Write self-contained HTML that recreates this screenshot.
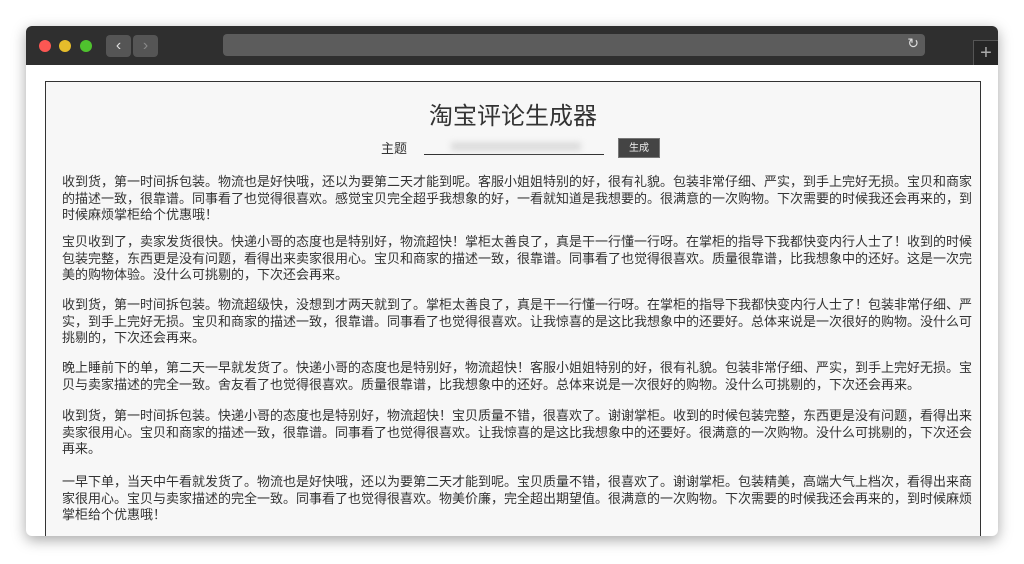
<!DOCTYPE html>
<html><head><meta charset="utf-8"><style>
*{margin:0;padding:0;box-sizing:border-box}
body{width:1024px;height:564px;background:#fff;position:relative;overflow:hidden;font-family:"Liberation Sans","Noto Sans CJK SC",sans-serif;}
.win{position:absolute;left:26px;top:26px;width:972px;height:510px;border-radius:6px;background:#fff;box-shadow:0 4px 14px rgba(0,0,0,.35);overflow:hidden}
.bar{position:absolute;left:0;top:0;width:972px;height:39px;background:#2f2f2f}
.dot{position:absolute;top:14px;width:12px;height:12px;border-radius:50%}
.nav{position:absolute;top:9px;width:25px;height:22px;background:#555;border-radius:4px;color:#ddd;font-size:16px;text-align:center;line-height:21px}
.url{position:absolute;left:197px;top:8px;width:702px;height:22px;background:#5c5c5c;border-radius:4px}
.plus{position:absolute;left:947px;top:14px;width:25px;height:25px;background:#262626;border-left:1px solid #555;border-top:1px solid #555;color:#aaa;font-size:20px;text-align:center;line-height:24px}
.box{position:absolute;left:19px;top:55px;width:936px;height:470px;border:1px solid #333;border-bottom:none;background:#f7f7f7}
h1{position:absolute;left:0;width:100%;top:14px;text-align:center;font-size:24px;font-weight:normal;color:#333}
.lab{position:absolute;left:335px;top:56px;font-size:13px;color:#333}
.inp{position:absolute;left:378px;top:56px;width:180px;height:17px;border-bottom:1px solid #333}
.blur{position:absolute;left:405px;top:60px;width:130px;height:9px;background:#ddd;filter:blur(3px)}
.btn{position:absolute;left:572px;top:56px;width:42px;height:20px;background:#444;color:#eee;font-size:10px;text-align:center;line-height:20px;border:1px solid #777}
.txt{position:absolute;left:16px;top:92px;width:910px;font-size:13px;line-height:16.5px;color:#333;white-space:nowrap}
.txt p{position:absolute;left:0}
</style></head><body>
<div class="win">
<div class="bar">
<div class="dot" style="left:13px;background:#fc5753"></div>
<div class="dot" style="left:33px;background:#e6bd2b"></div>
<div class="dot" style="left:54px;background:#4fc22e"></div>
<div class="nav" style="left:80px">&#x2039;</div>
<div class="nav" style="left:107px;color:#888">&#x203A;</div>
<div class="url"><span style="position:absolute;right:6px;top:1px;color:#ddd;font-size:14px">&#x21BB;</span></div>
<div class="plus">+</div>
</div>
<div class="box">
<h1>淘宝评论生成器</h1>
<div class="lab">主题</div>
<div class="inp"></div><div class="blur"></div>
<div class="btn">生成</div>
<div class="txt">
<p style="top:0">收到货，第一时间拆包装。物流也是好快哦，还以为要第二天才能到呢。客服小姐姐特别的好，很有礼貌。包装非常仔细、严实，到手上完好无损。宝贝和商家<br>的描述一致，很靠谱。同事看了也觉得很喜欢。感觉宝贝完全超乎我想象的好，一看就知道是我想要的。很满意的一次购物。下次需要的时候我还会再来的，到<br>时候麻烦掌柜给个优惠哦！</p>
<p style="top:60px">宝贝收到了，卖家发货很快。快递小哥的态度也是特别好，物流超快！掌柜太善良了，真是干一行懂一行呀。在掌柜的指导下我都快变内行人士了！收到的时候<br>包装完整，东西更是没有问题，看得出来卖家很用心。宝贝和商家的描述一致，很靠谱。同事看了也觉得很喜欢。质量很靠谱，比我想象中的还好。这是一次完<br>美的购物体验。没什么可挑剔的，下次还会再来。</p>
<p style="top:123px">收到货，第一时间拆包装。物流超级快，没想到才两天就到了。掌柜太善良了，真是干一行懂一行呀。在掌柜的指导下我都快变内行人士了！包装非常仔细、严<br>实，到手上完好无损。宝贝和商家的描述一致，很靠谱。同事看了也觉得很喜欢。让我惊喜的是这比我想象中的还要好。总体来说是一次很好的购物。没什么可<br>挑剔的，下次还会再来。</p>
<p style="top:186px">晚上睡前下的单，第二天一早就发货了。快递小哥的态度也是特别好，物流超快！客服小姐姐特别的好，很有礼貌。包装非常仔细、严实，到手上完好无损。宝<br>贝与卖家描述的完全一致。舍友看了也觉得很喜欢。质量很靠谱，比我想象中的还好。总体来说是一次很好的购物。没什么可挑剔的，下次还会再来。</p>
<p style="top:234px">收到货，第一时间拆包装。快递小哥的态度也是特别好，物流超快！宝贝质量不错，很喜欢了。谢谢掌柜。收到的时候包装完整，东西更是没有问题，看得出来<br>卖家很用心。宝贝和商家的描述一致，很靠谱。同事看了也觉得很喜欢。让我惊喜的是这比我想象中的还要好。很满意的一次购物。没什么可挑剔的，下次还会<br>再来。</p>
<p style="top:300px">一早下单，当天中午看就发货了。物流也是好快哦，还以为要第二天才能到呢。宝贝质量不错，很喜欢了。谢谢掌柜。包装精美，高端大气上档次，看得出来商<br>家很用心。宝贝与卖家描述的完全一致。同事看了也觉得很喜欢。物美价廉，完全超出期望值。很满意的一次购物。下次需要的时候我还会再来的，到时候麻烦<br>掌柜给个优惠哦！</p>
</div>
</div>
</div>
</body></html>
